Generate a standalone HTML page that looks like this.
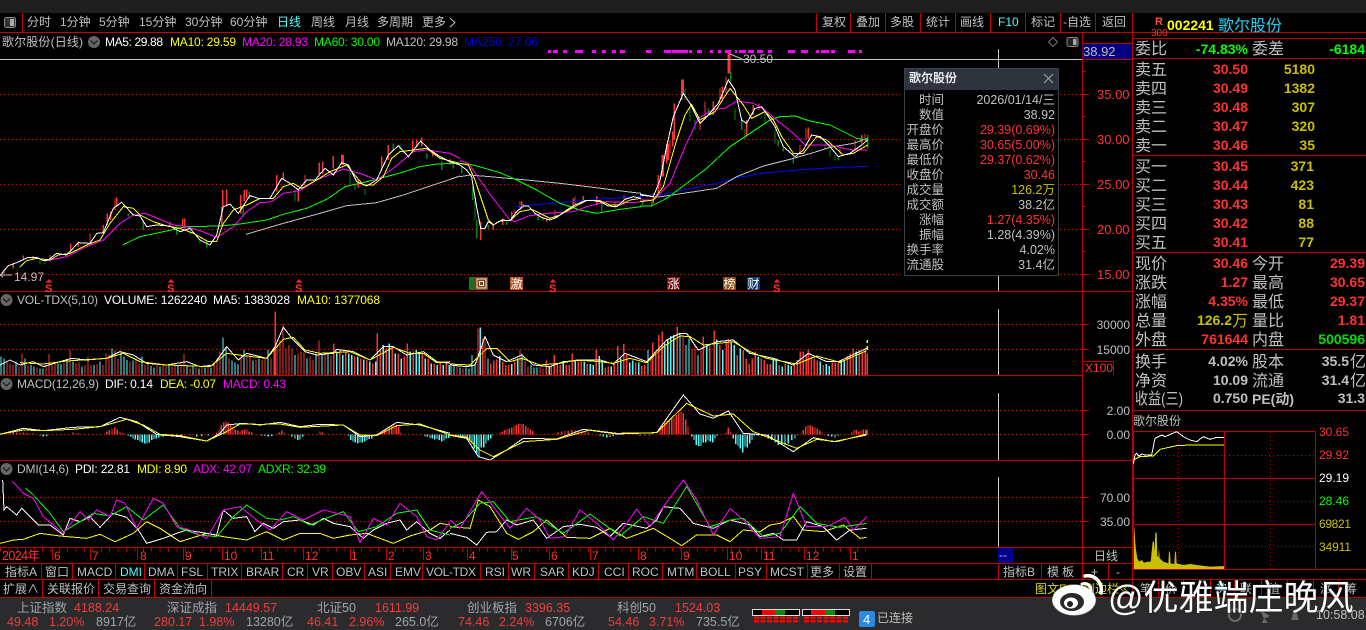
<!DOCTYPE html>
<html><head><meta charset="utf-8"><title>歌尔股份</title>
<style>
html,body{margin:0;padding:0;background:#000;width:1366px;height:630px;overflow:hidden}
svg{display:block;position:absolute;left:0;top:0}
text{font-family:"Liberation Sans","WenQuanYi Zen Hei","Noto Sans CJK SC",sans-serif;font-size:12px;fill:#c0c0c0;white-space:pre}
.r{fill:#ff3232}.y{fill:#ffff00}.m{fill:#ff00ff}.g{fill:#00ff00}.w{fill:#fff}.b{fill:#0000e0}.c{fill:#54fcfc}
.big{font-size:16px}
.n{font-size:14px;font-weight:bold;text-anchor:end}
.dy{fill:#c8c000}.dg{fill:#00e000}.e{text-anchor:end}
.pop text{font-size:12.5px}
.st{font-size:12.5px}.sv{fill:#9fa6ad}.sr{fill:#f03c3c}
.t *{vector-effect:non-scaling-stroke;fill:none;shape-rendering:crispEdges}
.t polyline{stroke-width:1px}
.t path{stroke-width:1.2px}
.W{stroke:#fff}.Y{stroke:#ff0}.M{stroke:#f0f}.G{stroke:#0f0}.A{stroke:#c0c0c0}.B{stroke:#00f}
.R{stroke:#ff3232}.C{stroke:#54fcfc}.D{stroke:#008a10}
</style></head><body>
<svg width="1366" height="630" viewBox="0 0 1366 630" xmlns="http://www.w3.org/2000/svg">
<rect x="0" y="0" width="1366" height="13" fill="#1f1f1f"/>
<rect x="0" y="597" width="1366" height="33" fill="#2b2b2d"/>

<!-- grid -->
<g stroke="#d00000" stroke-width="1" stroke-dasharray="1 3" fill="none" shape-rendering="crispEdges">
<path d="M0 94.5H1082M0 139.5H1082M0 184.5H1082M0 229.5H1082M0 274.5H1082"/>
<path d="M0 324.5H1082M0 349.5H1082M0 410.5H1082M0 434.5H1082M0 497.5H1082M0 521.5H1082"/>
<path d="M1133 455.5H1315M1133 501.5H1315M1133 546.5H1315M1178.5 432V569M1270.5 432V569"/>
</g>

<!-- main chart: frame Z7 -->
<g class="t" transform="translate(0,100) scale(.33333)">
<path class="R" d="M12 510V522M40 490V505M70 467V482M100 468V478M150 465V485M212 430V455M235 425V440M270 400V430M310 375V400M322 340V375M332 335V360M345 295V330M350 292V320M510 365V380M548 355V380M554 355V385M668 270V320M680 268V320M665 320V380M722 285V340M733 270V305M740 268V295M830 225V275M850 217V240M915 225V255M895 265V305M958 187V225M968 185V220M1000 168V205M1025 163V195M1030 165V195M1075 238V262M1145 170V210M1165 135V180M1238 122V150M1250 118V140M1265 112V140M1298 150V170M1350 175V195"/>
<path class="D" d="M120 480V492M135 482V493M385 340V350M430 360V390M530 380V405M570 390V405M600 415V430M620 425V442M730 320V350M748 275V295M885 270V305M1050 205V255M1065 250V270M1095 265V285M1180 130V150M1200 130V150M1280 160V175M1325 185V210M1360 190V205M1385 200V220"/>
<polyline class="A" points="738,403 850,370 960,340 1040,317 1130,308 1210,285 1300,255 1380,228"/>
<polyline class="G" points="368,435 420,410 500,393 560,380 660,378 720,372 800,360 850,343 920,325 980,298 1035,260 1100,245 1190,222 1260,200 1310,192 1380,190"/>
<polyline class="M" points="140,482 200,470 260,440 310,420 360,370 400,345 435,340 480,358 520,375 560,380 600,392 650,412 700,380 740,335 780,308 815,305 850,280 900,272 950,240 1030,207 1080,220 1130,240 1180,205 1240,155 1280,150 1350,160 1380,175"/>
<polyline class="Y" points="58,502 80,482 110,475 150,480 175,465 210,460 260,435 300,420 330,370 370,320 400,325 420,345 460,365 500,378 540,385 580,400 625,425 650,425 670,370 700,330 740,315 780,295 820,295 850,260 880,250 905,265 950,240 990,215 1040,195 1060,220 1090,255 1120,255 1150,230 1175,175 1200,155 1240,150 1280,145 1320,175 1380,190"/>
<polyline class="W" points="5,520 25,497 50,488 85,472 110,472 130,482 145,480 170,460 200,465 235,428 270,430 290,400 310,398 340,325 365,307 400,345 420,348 440,380 470,375 510,378 540,395 570,385 600,420 630,435 650,405 670,320 690,312 715,340 750,287 775,295 810,295 845,235 870,250 895,270 920,240 945,240 975,205 1000,225 1025,188 1045,195 1070,245 1100,258 1130,240 1165,165 1195,137 1225,170 1262,123 1290,150 1320,170 1350,185 1380,195"/>
</g>
<!-- frame Z11 -->
<g class="t" transform="translate(460,130) scale(.33333)">
<path class="R" d="M62 275V330M100 285V300M128 265V285M155 245V270M165 240V260M180 213V240M185 215V235M260 265V275M285 240V265M340 205V235M345 200V225M370 198V215M410 198V225M465 215V235M492 195V225M580 190V215M595 150V190M607 75V140M625 40V90M638 5V50"/>
<path class="D" d="M38 170V210M45 210V270M50 270V325M85 285V295M140 275V285M190 222V232M235 255V270M250 262V272M425 218V245M548 213V225M575 215V230"/>
<polyline class="A" points="0,140 30,135 90,140 200,150 300,160 400,172 500,185 543,190"/>
<polyline class="B" points="165,230 250,222 330,215 450,205 543,200"/>
<polyline class="G" points="0,100 40,105 120,128 170,150 230,180 300,220 360,240 410,250 480,238 543,230"/>
<polyline class="M" points="0,92 25,100 60,150 95,200 150,270 165,275 205,258 260,250 340,245 380,230 440,215 520,218 543,215"/>
<polyline class="Y" points="0,100 25,105 45,150 65,210 85,270 100,285 125,270 150,272 180,245 215,238 240,250 270,265 300,255 340,232 380,212 420,212 450,225 480,225 510,210 543,205"/>
<polyline class="W" points="0,105 20,120 35,140 48,220 62,295 75,295 85,275 100,285 115,275 130,272 150,272 170,245 190,228 205,228 225,250 245,262 270,270 290,262 320,240 345,225 375,212 400,212 420,215 445,228 470,230 495,208 520,200 543,205"/>
</g>
<!-- frame Z6 -->
<g class="t" transform="translate(640,40) scale(.33333)">
<path class="R" d="M40 480V490M55 405V460M60 420V445M70 345V410M80 310V370M90 300V340M103 190V300M125 118V180M130 118V160M180 240V270M195 185V230M220 185V225M240 145V190M247 140V185M258 110V160M265 30V100M269 30V100M320 240V290M340 195V225M357 190V210M480 315V345M498 265V300M505 262V295M600 325V340M645 300V330M665 285V310M675 282V305"/>
<path class="D" d="M135 145V180M150 205V245M165 240V270M205 205V225M272 95V125M285 205V240M305 235V270M315 265V295M375 220V250M405 270V310M415 300V320M430 320V335M460 355V370M555 310V330M570 330V350M585 345V362M595 350V362M683 285V325"/>
<polyline class="B" points="0,468 60,465 130,450 230,430 290,413 380,398 500,388 600,382 683,379"/>
<polyline class="A" points="0,462 50,472 130,460 230,445 290,410 370,378 450,358 520,338 570,322 640,310 683,295"/>
<polyline class="G" points="0,498 35,498 80,475 140,430 200,385 270,320 330,280 390,240 420,230 465,228 510,243 570,255 620,280 650,295 683,300"/>
<polyline class="M" points="0,480 40,480 90,430 135,320 175,235 220,208 255,205 290,183 340,190 375,210 410,240 460,280 495,315 570,315 610,325 640,330 683,330"/>
<polyline class="Y" points="0,485 40,480 70,440 110,300 135,225 155,193 180,240 225,215 270,145 310,195 335,235 375,215 400,240 425,290 460,340 490,340 530,290 560,300 610,345 640,340 683,315"/>
<polyline class="W" points="0,465 40,470 60,420 80,320 100,230 130,160 150,190 180,250 205,225 235,190 265,120 285,150 305,240 320,250 345,205 365,200 405,260 430,320 465,350 490,330 515,285 540,290 570,320 595,350 630,340 665,315 683,300"/>
</g>

<!-- lower panes left -->
<g class="t" transform="translate(0,290) scale(.33333)">
<path class="C" d="M3 256V200M12 256V205M48 256V215M75 256V205M93 256V225M102 256V230M120 256V235M129 256V235M174 256V220M183 256V222M201 256V210M219 256V215M246 256V230M282 256V225M300 256V215M336 256V175M363 256V185M372 256V200M381 256V210M399 256V212M426 256V200M453 256V228M462 256V232M480 256V230M507 256V222M534 256V228M561 256V225M579 256V228M597 256V235M615 256V232M633 256V232M669 256V142M678 256V172M696 256V212M705 256V218M714 256V222M732 256V180M759 256V212M777 256V205M804 256V180M885 256V195M921 256V205M948 256V190M966 256V195M984 256V195M1010 256V185M1028 256V195M1046 256V190M1055 256V195M1073 256V200M1091 256V208M1109 256V215M1127 256V215M1150 256V165M1168 256V160M1186 256V190M1204 256V205M1231 256V185M1249 256V180M1258 256V190M1276 256V205M1294 256V220M1312 256V225M1330 256V225M1348 256V225"/>
<path class="R" d="M21 256V215M30 256V220M39 256V225M57 256V230M66 256V190M84 256V225M111 256V232M138 256V225M147 256V192M156 256V225M165 256V222M192 256V218M210 256V178M228 256V220M237 256V218M255 256V225M264 256V200M273 256V225M291 256V222M309 256V225M318 256V190M327 256V195M345 256V180M354 256V205M390 256V215M408 256V205M417 256V222M435 256V225M444 256V215M471 256V222M489 256V225M498 256V228M516 256V230M525 256V222M543 256V215M552 256V192M570 256V235M588 256V232M606 256V230M624 256V228M642 256V218M651 256V205M660 256V185M687 256V205M723 256V195M741 256V200M750 256V192M768 256V208M786 256V210M795 256V205M813 256V205M822 256V175M826 256V65M831 256V165M840 256V150M849 256V102M858 256V175M867 256V165M876 256V175M894 256V190M903 256V185M912 256V188M930 256V200M939 256V210M957 256V152M975 256V192M993 256V198M1001 256V160M1019 256V180M1037 256V188M1064 256V200M1082 256V205M1100 256V210M1118 256V220M1132 256V130M1141 256V175M1159 256V175M1177 256V170M1195 256V190M1213 256V200M1222 256V160M1240 256V185M1267 256V190M1285 256V205M1303 256V222M1321 256V215M1339 256V220"/>
<polyline class="W" points="0,225 30,210 60,225 100,215 130,230 180,215 215,205 260,210 320,205 360,185 400,195 440,220 500,225 560,215 600,230 640,225 680,170 715,210 740,190 800,205 825,170 850,112 880,150 915,185 950,195 1000,190 1010,178 1060,185 1110,210 1150,170 1180,170 1220,195 1270,185 1310,215 1350,220"/>
<polyline class="Y" points="60,218 130,222 200,213 320,205 370,190 420,215 500,225 630,230 680,190 740,198 800,205 850,148 880,142 915,180 960,190 1050,185 1110,210 1180,172 1230,190 1270,190 1310,218 1350,215"/>

<path class="R" d="M30 433V428M40 433V427M50 433V427M60 433V428M70 433V428M80 433V429M90 433V430M100 433V431M220 433V428M228 433V430M236 433V431M320 433V424M328 433V420M336 433V416M344 433V412M352 433V418M360 433V425M368 433V429M650 433V428M657 433V420M664 433V405M671 433V398M678 433V395M685 433V398M692 433V405M699 433V410M706 433V418M713 433V422M720 433V425M727 433V420M734 433V418M741 433V418M748 433V424M755 433V428M838 433V428M845 433V422M852 433V428M960 433V425M967 433V428M1140 433V428M1147 433V425M1154 433V420M1161 433V415M1168 433V410M1175 433V405M1182 433V403M1189 433V405M1196 433V410M1203 433V428"/>
<path class="C" d="M120 434V437M130 434V440M140 434V438M385 434V437M392 434V440M399 434V445M406 434V448M413 434V450M420 434V455M427 434V458M434 434V460M441 434V460M448 434V458M455 434V450M462 434V447M469 434V445M476 434V442M483 434V440M490 434V440M497 434V438M510 434V436M530 434V438M545 434V437M570 434V437M590 434V440M605 434V438M625 434V436M785 434V436M795 434V438M805 434V440M815 434V438M875 434V440M885 434V445M893 434V450M900 434V448M908 434V440M1045 434V437M1052 434V450M1059 434V455M1066 434V458M1073 434V460M1080 434V458M1087 434V458M1094 434V455M1101 434V450M1108 434V447M1115 434V445M1122 434V440M1275 434V440M1282 434V440M1290 434V444M1297 434V446M1304 434V448M1311 434V447M1318 434V450M1325 434V455M1332 434V452M1339 434V445M1346 434V444"/>
<polyline class="W" points="0,433 70,415 130,422 220,412 300,410 360,382 410,395 470,433 540,440 620,453 660,430 680,405 730,400 780,405 840,397 900,410 960,403 1030,405 1080,440 1130,435 1190,397 1260,405 1350,430"/>
<polyline class="Y" points="0,433 70,420 130,422 220,418 300,410 380,388 430,405 480,433 540,437 620,453 670,430 720,402 780,403 840,402 900,412 1030,405 1080,435 1130,437 1190,407 1260,402 1350,435"/>

<polyline class="Y" points="0,760 40,750 70,748 120,730 180,738 260,745 300,733 345,755 400,730 440,695 480,715 540,755 620,730 670,740 740,750 800,725 850,750 900,730 960,730 1000,745 1050,735 1100,730 1180,760 1230,738 1290,720 1320,700 1350,705"/>
<polyline class="W" points="8,570 12,660 20,650 50,675 65,655 90,680 115,705 150,705 190,735 210,685 240,695 270,680 300,712 340,670 380,682 415,720 440,760 490,745 530,730 560,720 620,730 650,735 670,660 700,685 740,680 765,725 790,700 820,715 850,695 900,690 940,705 970,685 1000,700 1050,710 1090,745 1120,720 1160,700 1200,690 1220,720 1250,695 1290,730 1320,745 1350,720"/>
<polyline class="G" points="77,595 100,615 150,670 190,725 240,695 280,670 330,678 380,650 430,690 490,645 540,715 600,735 650,740 700,680 740,645 800,685 840,690 880,680 930,705 990,680 1030,665 1075,725 1130,710 1190,670 1250,660 1290,720 1350,735"/>
<polyline class="M" points="37,573 70,610 100,625 130,680 190,730 240,665 265,690 290,660 330,680 350,630 375,640 410,715 460,625 490,640 530,710 570,720 620,745 670,660 720,650 770,690 810,720 860,665 910,690 970,660 1010,670 1050,680 1080,758 1120,685 1160,705 1200,640 1250,680 1280,740 1310,750 1350,695"/>
</g>
<!-- lower panes right -->
<g class="t" transform="translate(450,290) scale(.33333)">
<path class="C" d="M3 256V228M12 256V222M30 256V232M48 256V232M57 256V235M66 256V195M75 256V225M91 256V113M114 256V205M149 256V198M185 256V222M203 256V205M216 256V190M243 256V225M252 256V232M261 256V232M298 256V230M340 256V218M376 256V210M403 256V215M421 256V222M430 256V225M448 256V198M457 256V212M484 256V230M512 256V205M539 256V218M548 256V212M566 256V218M594 256V180M644 256V160M653 256V150M662 256V138M671 256V135M690 256V130M708 256V165M717 256V145M744 256V195M770 256V165M800 256V148M818 256V180M844 256V155M853 256V165M871 256V175M925 256V200M970 256V205M979 256V205M997 256V230M1015 256V225M1024 256V228M1111 256V215M1129 256V222M1138 256V228M1174 256V210M1183 256V212M1219 256V185"/>
<path class="R" d="M21 256V225M39 256V235M84 256V115M98 256V145M105 256V155M122 256V220M131 256V212M140 256V208M158 256V215M167 256V225M176 256V225M194 256V215M210 256V178M225 256V215M234 256V230M270 256V228M279 256V235M289 256V212M304 256V228M313 256V195M322 256V220M331 256V225M349 256V225M358 256V225M367 256V190M385 256V215M394 256V210M412 256V222M439 256V178M466 256V232M475 256V230M493 256V222M503 256V168M521 256V162M530 256V195M557 256V218M575 256V228M584 256V225M603 256V200M608 256V158M617 256V190M626 256V135M635 256V170M637 256V125M682 256V110M699 256V140M726 256V175M735 256V165M753 256V175M760 256V140M779 256V170M793 256V122M809 256V165M829 256V150M835 256V145M862 256V195M880 256V180M889 256V205M898 256V222M907 256V205M916 256V185M934 256V205M943 256V210M952 256V222M961 256V222M988 256V225M1006 256V222M1033 256V222M1042 256V210M1051 256V185M1060 256V185M1069 256V195M1075 256V178M1084 256V200M1093 256V205M1102 256V212M1120 256V225M1147 256V218M1156 256V218M1165 256V218M1192 256V200M1201 256V190M1210 256V175M1228 256V180M1237 256V185M1246 256V180M1252 256V190"/>
<polyline class="W" points="0,225 50,230 75,225 105,140 130,195 170,215 215,195 250,225 300,230 340,215 400,210 450,210 490,222 525,190 590,215 650,150 690,130 710,130 745,180 800,155 850,150 900,190 970,205 1030,225 1075,190 1130,215 1165,215 1250,175"/>
<polyline class="Y" points="0,222 60,225 110,176 140,175 180,215 215,205 270,225 330,220 380,210 450,215 490,220 540,205 590,218 640,170 690,138 720,140 760,165 850,155 900,185 950,205 1040,222 1100,198 1170,217 1250,182"/>
<path class="Y" stroke-dasharray="4 3" d="M1252 180V150"/>

<path class="R" d="M150 433V428M157 433V425M164 433V420M171 433V418M178 433V415M185 433V412M192 433V408M199 433V405M206 433V402M213 433V402M220 433V402M227 433V408M234 433V413M241 433V418M248 433V423M255 433V430M315 433V430M325 433V428M335 433V425M345 433V423M355 433V423M365 433V420M375 433V420M385 433V422M395 433V425M405 433V425M415 433V428M630 433V420M637 433V405M644 433V398M651 433V392M658 433V388M665 433V385M672 433V382M679 433V375M686 433V368M693 433V365M700 433V370M707 433V388M714 433V410M828 433V428M835 433V413M842 433V428M1060 433V420M1067 433V410M1074 433V405M1081 433V407M1088 433V410M1095 433V412M1102 433V415M1109 433V422M1116 433V428M1205 433V428M1212 433V420M1219 433V420M1226 433V425M1233 433V422M1240 433V418M1247 433V418M1252 433V420"/>
<path class="C" d="M3 434V438M10 434V438M17 434V440M24 434V441M31 434V441M38 434V440M45 434V445M52 434V445M59 434V450M66 434V460M73 434V475M80 434V490M87 434V500M94 434V472M101 434V472M108 434V460M115 434V452M122 434V445M129 434V437M450 434V438M460 434V440M470 434V442M480 434V441M490 434V438M570 434V437M585 434V437M600 434V436M725 434V440M732 434V450M739 434V465M746 434V468M753 434V468M760 434V458M767 434V458M774 434V452M781 434V455M788 434V458M795 434V445M802 434V436M850 434V445M857 434V462M864 434V468M871 434V475M878 434V488M885 434V470M892 434V472M899 434V460M906 434V450M913 434V436M925 434V436M935 434V438M945 434V440M955 434V445M965 434V450M975 434V458M985 434V465M995 434V465M1005 434V465M1015 434V460M1025 434V450M1035 434V445M1043 434V435M1135 434V438M1145 434V440M1155 434V442M1165 434V437"/>
<polyline class="W" points="0,436 50,445 85,500 120,510 170,480 220,445 320,447 400,418 500,432 620,428 700,315 750,372 790,385 835,363 880,430 950,435 1030,485 1090,443 1150,455 1250,435"/>
<polyline class="Y" points="0,435 50,442 90,480 130,500 220,455 320,448 420,420 500,430 620,428 710,340 790,378 850,372 910,425 1040,475 1100,448 1160,455 1250,432"/>

<polyline class="Y" points="0,710 60,715 85,630 120,650 170,730 205,748 250,725 290,690 350,742 420,745 480,715 530,745 610,715 660,745 695,767 740,735 800,735 840,755 880,720 930,725 960,705 990,700 1030,680 1060,720 1120,725 1180,705 1230,745 1250,742"/>
<polyline class="W" points="0,730 50,742 80,765 110,727 140,725 170,690 200,705 250,690 290,745 340,710 390,703 440,712 480,740 520,700 590,715 620,690 640,650 690,655 730,700 790,715 840,690 900,705 930,740 970,730 1000,750 1040,750 1070,695 1120,710 1160,750 1200,720 1250,715"/>
<polyline class="G" points="0,715 40,695 90,640 130,635 180,695 260,680 340,730 420,672 510,738 580,680 640,700 710,590 780,710 840,690 880,685 940,740 990,730 1050,650 1100,700 1170,712 1250,700"/>
<polyline class="M" points="0,690 30,715 95,605 130,650 180,715 230,655 270,690 300,745 345,740 390,660 440,700 490,750 530,700 560,658 600,710 640,650 700,570 740,630 790,735 840,655 880,690 930,745 990,740 1030,610 1070,710 1130,710 1185,683 1210,720 1250,680"/>
</g>

<!-- intraday -->
<polygon transform="translate(1130,250) scale(.33333)" fill="#c8c000" points="10,958 10,832 13,832 14,850 16,880 18,900 22,925 28,935 35,930 42,938 55,935 62,935 68,875 72,875 74,905 76,848 80,848 82,920 85,920 87,895 89,925 100,935 115,940 117,905 120,905 122,940 133,942 135,905 138,905 140,940 160,945 180,942 200,945 240,950 285,948 285,958"/>

<!-- main red structure -->
<g stroke="#c00000" stroke-width="1" fill="none" shape-rendering="crispEdges">
<path d="M0 32.5H1366M0 291.5H1132M0 375.5H1082M0 460.5H1132M0 547.5H1132M0 563.5H1132M0 579.5H1366M0 597.5H1366"/>
<path d="M22.5 13V32M816.5 13V32M850.5 13V32M885.5 13V32M920.5 13V32M955.5 13V32M990.5 13V32M1025.5 13V32M1060.5 13V32M1095.5 13V32M1132.5 13V597"/>
<path d="M1082.5 33V579"/>
<path d="M1082 43.5H1132M1082 59.5H1132"/>
<path d="M1132 38.5H1366M1132 58.5H1366M1132 155.5H1366M1132 252.5H1366M1132 349.5H1366M1132 410.5H1366"/>
<path d="M1133 431.5H1315M1133 478.5H1315M1133 524.5H1315M1133 569.5H1366M1133.5 431V569M1224.5 431V569M1315.5 431V569"/>
<path d="M1082 94.5H1089M1082 139.5H1089M1082 184.5H1089M1082 229.5H1089M1082 274.5H1089M1082 71.5H1086M1082 116.5H1086M1082 161.5H1086M1082 206.5H1086M1082 251.5H1086"/>
<path d="M1082 324.5H1089M1082 349.5H1089M1082 410.5H1089M1082 434.5H1089M1082 497.5H1089M1082 521.5H1089"/>
<path d="M1083.5 361.5H1113.5V375.5"/>
<path d="M41.5 563V579M72.5 563V579M115.5 563V579M144.5 563V579M177.5 563V579M207.5 563V579M241.5 563V579M282.5 563V579M307.5 563V579M332.5 563V579M364.5 563V579M390.5 563V579M422.5 563V579M480.5 563V579M508.5 563V579M534.5 563V579M568.5 563V579M598.5 563V579M628.5 563V579M662.5 563V579M696.5 563V579M735.5 563V579M766.5 563V579M807.5 563V579M839.5 563V579M871.5 563V579M998.5 563V579M1041.5 563V579M1108.5 563V579"/>
<path d="M42.5 579V597M98.5 579V597M154.5 579V597M211.5 579V597M1158.5 579V597M1183.5 579V597M1210.5 579V597M1234.5 579V597M1261.5 579V597M1287.5 579V597M1313.5 579V597M1338.5 579V597"/>
<path d="M52.5 547V560M90.5 547V560M137.5 547V560M183.5 547V560M222.5 547V560M261.5 547V560M303.5 547V560M350.5 547V560M386.5 547V560M423.5 547V560M467.5 547V560M511.5 547V560M549.5 547V560M590.5 547V560M638.5 547V560M681.5 547V560M727.5 547V560M761.5 547V560M804.5 547V560M850.5 547V560"/>
<path d="M0 549.5H868" stroke-width="4" stroke-dasharray="1 7.4"/>
</g>

<!-- white crosshair -->
<g stroke="#c8c8c8" stroke-width="1" fill="none" shape-rendering="crispEdges">
<path d="M0 59.5H1082M998.5 49V291M998.5 309V375M998.5 393V460M998.5 477V547"/>
</g>

<!-- toolbar -->
<rect x="4.5" y="17.5" width="11" height="10" rx="2" fill="#333" stroke="#888"/><rect x="10" y="19" width="4" height="7" fill="#aaa"/>
<g>
<text x="27" y="26">分时</text><text x="60" y="26">1分钟</text><text x="99" y="26">5分钟</text><text x="139" y="26">15分钟</text><text x="185" y="26">30分钟</text><text x="230" y="26">60分钟</text><text x="277" y="26" class="c">日线</text><text x="311" y="26">周线</text><text x="345" y="26">月线</text><text x="377" y="26">多周期</text><text x="422" y="26">更多</text>
<path d="M450 18l5 4.5-5 4.5" fill="none" stroke="#c0c0c0"/>
<text x="822" y="26">复权</text><text x="856" y="26">叠加</text><text x="890" y="26">多股</text><text x="926" y="26">统计</text><text x="960" y="26">画线</text><text x="998" y="26" class="c">F10</text><text x="1031" y="26">标记</text><text x="1063" y="26">-自选</text><text x="1102" y="26">返回</text>
</g>

<!-- main header -->
<text x="2" y="46" textLength="81">歌尔股份(日线)</text>
<circle cx="94" cy="42" r="6" fill="#666"/><path d="M90.5 40.5l3.5 3.5 3.5-3.5" fill="none" stroke="#222" stroke-width="1.3"/>
<text x="105" y="46" class="w" textLength="58">MA5: 29.88</text>
<text x="170" y="46" class="y" textLength="66">MA10: 29.59</text>
<text x="242" y="46" class="m" textLength="66">MA20: 28.93</text>
<text x="314" y="46" class="g" textLength="66">MA60: 30.00</text>
<text x="386" y="46" textLength="72">MA120: 29.98</text>
<text x="464" y="46" class="b" textLength="74">MA250: 27.06</text>
<path d="M1053 37.5l4.5 4.5-4.5 4.5-4.5-4.5z" fill="none" stroke="#777"/>
<rect x="1067" y="37.5" width="11" height="9" rx="2" fill="#222" stroke="#888"/><rect x="1073" y="39" width="3.5" height="6" fill="#aaa"/>

<g fill="#ff00ff" shape-rendering="crispEdges">
<path d="M548 50h3v3h-3zM553 50h5v3h-5zM563 50h4v3h-4zM575 50h8v3h-8zM592 50h4v3h-4zM602 50h4v3h-4zM612 50h4v3h-4zM620 50h5v3h-5zM646 50h5v3h-5zM664 50h7v3h-7zM672 50h16v3h-16zM689 50h3v3h-3zM697 50h5v3h-5zM710 50h3v3h-3zM718 50h3v3h-3zM725 50h6v3h-6zM735 50h2v3h-2zM739 50h7v3h-7zM748 50h6v3h-6zM757 50h6v3h-6zM768 50h4v3h-4zM788 50h7v3h-7zM801 50h7v3h-7zM816 50h3v3h-3zM821 50h8v3h-8zM831 50h4v3h-4zM848 50h7v3h-7zM859 50h3v3h-3z"/>
</g>
<text x="743" y="63" fill="#c0c0c0">30.50</text>
<path d="M730 54l12 5" stroke="#c0c0c0" fill="none"/>
<path d="M0 275h12M0 275l3-2M0 275l3 2" stroke="#c0c0c0" fill="none"/>
<text x="14" y="281" textLength="30">14.97</text>

<!-- S marks -->
<g>
<path d="M49 279l3.500 3.500h-7z" fill="#ff2020"/><text x="45" y="292" style="font-size:11px;font-weight:bold" class="r">S</text>
<path d="M171 279l3.500 3.500h-7z" fill="#ff2020"/><text x="167" y="292" style="font-size:11px;font-weight:bold" class="r">S</text>
<path d="M299 279l3.500 3.500h-7z" fill="#ff2020"/><text x="295" y="292" style="font-size:11px;font-weight:bold" class="r">S</text>
<path d="M553 279l3.500 3.500h-7z" fill="#ff2020"/><text x="549" y="292" style="font-size:11px;font-weight:bold" class="r">S</text>
<path d="M777 279l3.500 3.500h-7z" fill="#ff2020"/><text x="773" y="292" style="font-size:11px;font-weight:bold" class="r">S</text>
</g>
<rect x="469" y="277" width="5" height="13" fill="#0a7a1a"/><rect x="474" y="277" width="14" height="13" fill="#7a4310"/><rect x="477" y="279" width="9" height="9" fill="none" stroke="#eee"/><rect x="479.500" y="281.500" width="4" height="4" fill="none" stroke="#eee"/>
<rect x="510" y="277" width="13" height="13" fill="#b5561e"/><text x="510.500" y="288" class="w" style="font-size:12px">激</text>
<rect x="667" y="277" width="13" height="13" fill="#7a0c0c"/><text x="667.500" y="288" class="w" style="font-size:12px">涨</text>
<rect x="723" y="277" width="13" height="13" fill="#8a4a10"/><text x="723.500" y="288" class="w" style="font-size:12px">榜</text>
<rect x="747" y="277" width="13" height="13" fill="#0f3c70"/><text x="747.500" y="288" class="w" style="font-size:12px">财</text>

<!-- lower pane headers -->
<circle cx="6.500" cy="300" r="6" fill="#666"/><path d="M3 298.500l3.500 3.500 3.500-3.500" fill="none" stroke="#222" stroke-width="1.300"/>
<text x="17" y="304" fill="#aaa" textLength="81">VOL-TDX(5,10)</text>
<text x="104" y="304" class="w" textLength="103">VOLUME: 1262240</text>
<text x="213" y="304" class="w" textLength="77">MA5: 1383028</text>
<text x="297" y="304" class="y" textLength="83">MA10: 1377068</text>
<circle cx="6.500" cy="384" r="6" fill="#666"/><path d="M3 382.500l3.500 3.500 3.500-3.500" fill="none" stroke="#222" stroke-width="1.300"/>
<text x="17" y="388" textLength="82">MACD(12,26,9)</text>
<text x="105" y="388" class="w" textLength="48">DIF: 0.14</text>
<text x="160" y="388" class="y" textLength="56">DEA: -0.07</text>
<text x="223" y="388" class="m" textLength="63">MACD: 0.43</text>
<circle cx="6.500" cy="469" r="6" fill="#666"/><path d="M3 467.500l3.500 3.500 3.500-3.500" fill="none" stroke="#222" stroke-width="1.300"/>
<text x="17" y="473" textLength="52">DMI(14,6)</text>
<text x="75" y="473" class="w" textLength="55">PDI: 22.81</text>
<text x="137" y="473" class="y" textLength="50">MDI: 8.90</text>
<text x="193" y="473" class="m" textLength="59">ADX: 42.07</text>
<text x="258" y="473" class="g" textLength="68">ADXR: 32.39</text>

<!-- axis labels -->
<rect x="1082.500" y="44" width="49" height="15" fill="#000080"/>
<text x="1083" y="56" fill="#b8b8ff" style="font-size:13px">38.92</text>
<text x="1097" y="99" class="r" style="font-size:13px">35.00</text><text x="1097" y="144" class="r" style="font-size:13px">30.00</text><text x="1097" y="189" class="r" style="font-size:13px">25.00</text><text x="1097" y="234" class="r" style="font-size:13px">20.00</text><text x="1097" y="279" class="r" style="font-size:13px">15.00</text>
<text x="1130" y="329" class="e">30000</text><text x="1130" y="354" class="e">15000</text>
<text x="1085" y="372" class="r">X100</text>
<text x="1130" y="415" class="e">2.00</text><text x="1130" y="439" class="e">0.00</text>
<text x="1130" y="502" class="e">70.00</text><text x="1130" y="526" class="e">35.00</text>

<!-- time axis -->
<text x="2" y="560" class="r" textLength="38" style="font-size:12.500px">2024年</text>
<text x="54" y="560" class="r">6</text><text x="92" y="560" class="r">7</text><text x="140" y="560" class="r">8</text><text x="185" y="560" class="r">9</text><text x="224" y="560" class="r">10</text><text x="262" y="560" class="r">11</text><text x="305" y="560" class="r">12</text><text x="351" y="560" class="r">1</text><text x="388" y="560" class="r">2</text><text x="425" y="560" class="r">3</text><text x="469" y="560" class="r">4</text><text x="512" y="560" class="r">5</text><text x="551" y="560" class="r">6</text><text x="592" y="560" class="r">7</text><text x="640" y="560" class="r">8</text><text x="683" y="560" class="r">9</text><text x="729" y="560" class="r">10</text><text x="763" y="560" class="r">11</text><text x="806" y="560" class="r">12</text><text x="852" y="560" class="r">1</text>
<rect x="998" y="548" width="15" height="15" fill="#000090"/><text x="999" y="559" fill="#b8b8ff">--</text>
<text x="1094" y="560">日线</text>

<!-- tabs -->
<g>
<text x="5" y="576">指标A</text><text x="45" y="576">窗口</text><text x="77" y="576">MACD</text><text x="120" y="576" class="c">DMI</text><text x="148" y="576">DMA</text><text x="181" y="576">FSL</text><text x="211" y="576">TRIX</text><text x="246" y="576">BRAR</text><text x="287" y="576">CR</text><text x="312" y="576">VR</text><text x="336" y="576">OBV</text><text x="368" y="576">ASI</text><text x="395" y="576">EMV</text><text x="426" y="576" textLength="50">VOL-TDX</text><text x="485" y="576">RSI</text><text x="511" y="576">WR</text><text x="540" y="576">SAR</text><text x="572" y="576">KDJ</text><text x="604" y="576">CCI</text><text x="632" y="576">ROC</text><text x="667" y="576">MTM</text><text x="700" y="576">BOLL</text><text x="738" y="576">PSY</text><text x="770" y="576">MCST</text><text x="810" y="576">更多</text><text x="843" y="576">设置</text>
<text x="1003" y="576">指标B</text><text x="1047" y="576" textLength="27">模板</text><text x="1091" y="576">+</text><text x="1116" y="576">-</text>
<text x="3" y="593">扩展∧</text><text x="47" y="593">关联报价</text><text x="103" y="593">交易查询</text><text x="159" y="593">资金流向</text>
<text x="1035" y="593" style="fill:#dcdc00">图文F10 侧边栏≪</text>
<text x="1140" y="593">笔</text><text x="1165" y="593">价</text><text x="1216" y="593" class="c">势</text><text x="1240" y="593">联</text><text x="1268" y="593">值</text><text x="1320" y="593">派</text><text x="1345" y="593">筹</text>
</g>

<!-- right panel -->
<text x="1155" y="25" style="font-size:11px;font-weight:bold;fill:#ff5040">R</text>
<text x="1151" y="36" style="font-size:10px;fill:#ff3232">300</text>
<text x="1167" y="30" class="y" style="font-size:14px;font-weight:bold">002241</text>
<text x="1218" y="31" class="big" style="fill:#20d0f0">歌尔股份</text>

<text x="1135" y="54" class="big">委比</text><text x="1248" y="54" class="n g">-74.83%</text><text x="1252" y="54" class="big">委差</text><text x="1365" y="54" class="n g">-6184</text>
<g>
<text x="1135" y="75" class="big">卖五</text><text x="1248" y="74" class="n r">30.50</text><text x="1315" y="74" class="n dy">5180</text>
<text x="1135" y="94" class="big">卖四</text><text x="1248" y="93" class="n r">30.49</text><text x="1315" y="93" class="n dy">1382</text>
<text x="1135" y="113" class="big">卖三</text><text x="1248" y="112" class="n r">30.48</text><text x="1315" y="112" class="n dy">307</text>
<text x="1135" y="132" class="big">卖二</text><text x="1248" y="131" class="n r">30.47</text><text x="1315" y="131" class="n dy">320</text>
<text x="1135" y="151" class="big">卖一</text><text x="1248" y="150" class="n r">30.46</text><text x="1315" y="150" class="n dy">35</text>
<text x="1135" y="172" class="big">买一</text><text x="1248" y="171" class="n r">30.45</text><text x="1314" y="171" class="n dy">371</text>
<text x="1135" y="191" class="big">买二</text><text x="1248" y="190" class="n r">30.44</text><text x="1314" y="190" class="n dy">423</text>
<text x="1135" y="210" class="big">买三</text><text x="1248" y="209" class="n r">30.43</text><text x="1314" y="209" class="n dy">81</text>
<text x="1135" y="229" class="big">买四</text><text x="1248" y="228" class="n r">30.42</text><text x="1314" y="228" class="n dy">88</text>
<text x="1135" y="248" class="big">买五</text><text x="1248" y="247" class="n r">30.41</text><text x="1314" y="247" class="n dy">77</text>

<text x="1135" y="269" class="big">现价</text><text x="1248" y="268" class="n r">30.46</text><text x="1252" y="269" class="big">今开</text><text x="1365" y="268" class="n r">29.39</text>
<text x="1135" y="288" class="big">涨跌</text><text x="1248" y="287" class="n r">1.27</text><text x="1252" y="288" class="big">最高</text><text x="1365" y="287" class="n r">30.65</text>
<text x="1135" y="307" class="big">涨幅</text><text x="1248" y="306" class="n r">4.35%</text><text x="1252" y="307" class="big">最低</text><text x="1365" y="306" class="n r">29.37</text>
<text x="1135" y="326" class="big">总量</text><text x="1232" y="325" class="n dy">126.2</text><text x="1232" y="326" class="big dy">万</text><text x="1252" y="326" class="big">量比</text><text x="1365" y="325" class="n r">1.81</text>
<text x="1135" y="345" class="big">外盘</text><text x="1248" y="344" class="n r">761644</text><text x="1252" y="345" class="big">内盘</text><text x="1365" y="344" class="n dg">500596</text>

<text x="1135" y="367" class="big">换手</text><text x="1248" y="366" class="n">4.02%</text><text x="1252" y="367" class="big">股本</text><text x="1349" y="366" class="n">35.5</text><text x="1350" y="367" class="big">亿</text>
<text x="1135" y="386" class="big">净资</text><text x="1248" y="385" class="n">10.09</text><text x="1252" y="386" class="big">流通</text><text x="1349" y="385" class="n">31.4</text><text x="1350" y="386" class="big">亿</text>
<text x="1135" y="404" class="big" textLength="48" lengthAdjust="spacingAndGlyphs">收益(三)</text><text x="1248" y="403" class="n">0.750</text><text x="1252" y="404" style="font-size:14px;font-weight:bold">PE(动)</text><text x="1365" y="403" class="n">31.3</text>
</g>
<text x="1133" y="425">歌尔股份</text>
<text x="1319" y="436" class="r" textLength="30">30.65</text>
<text x="1319" y="459" class="r" textLength="30">29.92</text>
<text x="1319" y="482" class="w" textLength="30">29.19</text>
<text x="1319" y="505" class="g" textLength="30">28.46</text>
<text x="1319" y="528" class="dy" textLength="32">69821</text>
<text x="1319" y="551" class="dy" textLength="32">34911</text>

<!-- intraday lines -->
<g class="t" transform="translate(1130,250) scale(.33333)">
<polyline class="W" points="10,640 15,615 20,610 27,618 35,612 45,615 65,615 75,565 85,560 95,555 105,560 140,545 160,560 180,570 200,575 220,560 240,568 260,562 282,563"/>
<polyline class="Y" points="10,630 30,620 70,618 90,598 140,587 180,585 282,585"/>
</g>

<!-- popup -->
<g class="pop">
<rect x="904.500" y="68.500" width="154" height="207" fill="#000" stroke="#3a3f4c"/>
<rect x="905" y="69" width="153" height="21" fill="#2f333e"/>
<text x="909" y="82" style="font-size:12px;font-weight:bold;fill:#e8e8f0">歌尔股份</text>
<path d="M1044 74l9 9M1053 74l-9 9" stroke="#a0a4ac" fill="none"/>
<g text-anchor="end">
<text x="944" y="104">时间</text><text x="1055" y="104">2026/01/14/三</text>
<text x="944" y="119">数值</text><text x="1055" y="119">38.92</text>
<text x="944" y="134">开盘价</text><text x="1055" y="134" class="r">29.39(0.69%)</text>
<text x="944" y="149">最高价</text><text x="1055" y="149" class="r">30.65(5.00%)</text>
<text x="944" y="164">最低价</text><text x="1055" y="164" class="r">29.37(0.62%)</text>
<text x="944" y="179">收盘价</text><text x="1055" y="179" class="r">30.46</text>
<text x="944" y="194">成交量</text><text x="1055" y="194" class="dy">126.2万</text>
<text x="944" y="209">成交额</text><text x="1055" y="209">38.2亿</text>
<text x="944" y="224">涨幅</text><text x="1055" y="224" class="r">1.27(4.35%)</text>
<text x="944" y="239">振幅</text><text x="1055" y="239">1.28(4.39%)</text>
<text x="944" y="254">换手率</text><text x="1055" y="254">4.02%</text>
<text x="944" y="269">流通股</text><text x="1055" y="269">31.4亿</text>
</g>
</g>

<!-- status bar -->
<g class="st">
<text x="17" y="612" class="st sv">上证指数</text><text x="74" y="612" class="st sr">4188.24</text>
<text x="167" y="612" class="st sv">深证成指</text><text x="225" y="612" class="st sr">14449.57</text>
<text x="317" y="612" class="st sv">北证50</text><text x="375" y="612" class="st sr">1611.99</text>
<text x="467" y="612" class="st sv">创业板指</text><text x="525" y="612" class="st sr">3396.35</text>
<text x="617" y="612" class="st sv">科创50</text><text x="675" y="612" class="st sr">1524.03</text>
<text x="7" y="626" class="st sr">49.48</text><text x="49" y="626" class="st sr">1.20%</text><text x="96" y="626" class="st sv">8917亿</text>
<text x="154" y="626" class="st sr">280.17</text><text x="199" y="626" class="st sr">1.98%</text><text x="246" y="626" class="st sv">13280亿</text>
<text x="307" y="626" class="st sr">46.41</text><text x="349" y="626" class="st sr">2.96%</text><text x="395" y="626" class="st sv">265.0亿</text>
<text x="458" y="626" class="st sr">74.46</text><text x="499" y="626" class="st sr">2.24%</text><text x="545" y="626" class="st sv">6706亿</text>
<text x="608" y="626" class="st sr">54.46</text><text x="649" y="626" class="st sr">3.71%</text><text x="696" y="626" class="st sv">735.5亿</text>
</g>
<g shape-rendering="crispEdges">
<rect x="752.500" y="609.500" width="47" height="6" fill="#000" stroke="#ddd"/><rect x="762" y="610" width="13" height="5" fill="#f00"/><rect x="775" y="610" width="10" height="5" fill="#0a8a0a"/>
<rect x="802.500" y="609.500" width="47" height="6" fill="#000" stroke="#ddd"/><rect x="811" y="610" width="14" height="5" fill="#f00"/><rect x="825" y="610" width="10" height="5" fill="#0a8a0a"/>
<path d="M754 617.500h46M754 621h46M804 617.500h45M804 621h45" stroke="#f00" stroke-width="2.500" stroke-dasharray="5 1.500"/>
</g>
<rect x="859" y="611" width="16" height="16" rx="2" fill="#2a8ae0"/><text x="863" y="624" class="w" style="font-size:13px">4</text>
<text x="877" y="622" fill="#a8a8a8">已连接</text>
<g fill="#6a6a6a">
<circle cx="1235" cy="615" r="6" fill="none" stroke="#6a6a6a" stroke-width="2"/>
<path d="M1260 610l10 6-6 3z M1264 618l-2 5h6z"/>
<path d="M1291 620c2-2 1-9 4-10 3 1 2 8 4 10z"/>
</g>
<text x="1316" y="619" fill="#9ea0a4" style="font-size:12.500px">10:58:08</text>

<!-- watermark -->
<g>
<ellipse cx="1074" cy="600" rx="22" ry="15.500" fill="#fff" stroke="#333" stroke-opacity=".35"/>
<ellipse cx="1072" cy="602" rx="12" ry="9" fill="#2a2a2a"/>
<ellipse cx="1071" cy="603" rx="7" ry="5.500" fill="#fff"/>
<circle cx="1070" cy="604" r="3" fill="#222"/>
<path d="M1082 584c6-2 10 3 9 9" fill="none" stroke="#fff" stroke-width="3" stroke-linecap="round"/>
<path d="M1085 576c10-2 18 7 16 17" fill="none" stroke="#fff" stroke-width="3.500" stroke-linecap="round"/>
<text x="1108" y="610" style="font-size:35px;fill:#fff;font-family:'Liberation Sans','Noto Sans CJK SC',sans-serif;stroke:#222;stroke-opacity:.5;stroke-width:2px;paint-order:stroke">@优雅端庄晚风</text>
</g>
</svg>
</body></html>
